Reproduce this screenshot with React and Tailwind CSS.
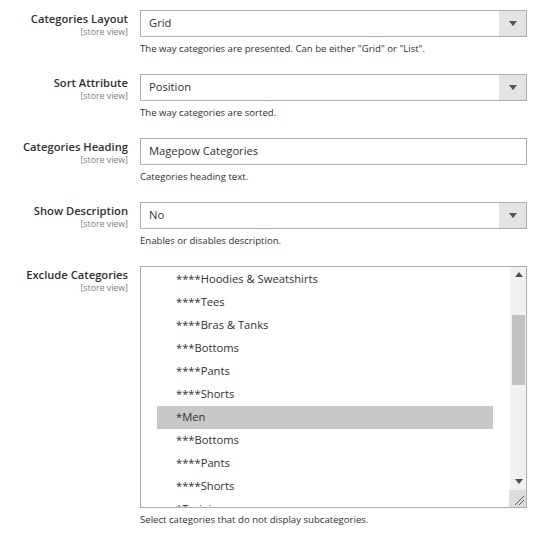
import React from "react";

const OPTIONS = [
  "****Hoodies & Sweatshirts",
  "****Tees",
  "****Bras & Tanks",
  "***Bottoms",
  "****Pants",
  "****Shorts",
  "*Men",
  "***Bottoms",
  "****Pants",
  "****Shorts",
  "*Training",
];

function Label({ title }) {
  return (
    <div className="w-[128px] shrink-0 text-right pt-[1px]">
      <div className="text-[11.2px] leading-[16px] font-semibold text-[#303030]">{title}</div>
      <div className="text-[8.8px] leading-[10px] text-[#808080]">[store view]</div>
    </div>
  );
}

function Arrow({ up }) {
  return (
    <svg width="8" height="5" viewBox="0 0 8 5" className="block">
      {up ? <path d="M0 5 L4 0 L8 5 Z" fill="#505050" /> : <path d="M0 0 L8 0 L4 5 Z" fill="#505050" />}
    </svg>
  );
}

function Select({ value }) {
  return (
    <div className="flex h-[27px] border border-[#adadad] bg-white">
      <div className="flex-1 flex items-center pl-[8px] text-[11.2px] text-[#303030]">{value}</div>
      <div className="w-[27px] bg-[#e3e3e3] flex items-center justify-center">
        <Arrow />
      </div>
    </div>
  );
}

function Help({ children }) {
  return <div className="mt-[5px] text-[9.6px] leading-[14px] text-[#303030]">{children}</div>;
}

function Row({ title, children }) {
  return (
    <div className="flex gap-[12px] mb-[18px]">
      <Label title={title} />
      <div className="w-[387px]">{children}</div>
    </div>
  );
}

export default function App() {
  return (
    <div className="w-[552px] h-[539px] bg-white pt-[10px]" style={{ fontFamily: "'Open Sans', sans-serif" }}>
      <Row title="Categories Layout">
        <Select value="Grid" />
        <Help>The way categories are presented. Can be either "Grid" or "List".</Help>
      </Row>
      <Row title="Sort Attribute">
        <Select value="Position" />
        <Help>The way categories are sorted.</Help>
      </Row>
      <Row title="Categories Heading">
        <div className="h-[27px] border border-[#adadad] bg-white flex items-center pl-[8px] text-[11.2px] text-[#303030]">
          Magepow Categories
        </div>
        <Help>Categories heading text.</Help>
      </Row>
      <Row title="Show Description">
        <Select value="No" />
        <Help>Enables or disables description.</Help>
      </Row>
      <Row title="Exclude Categories">
        <div className="relative h-[242px] border border-[#adadad] bg-white overflow-hidden">
          <div className="pl-[16px] pr-[33px] pt-[1px]">
            {OPTIONS.map((o, i) => (
              <div
                key={i}
                className={
                  "h-[23px] flex items-center pl-[19px] text-[11.2px] text-[#303030] " +
                  (o === "*Men" ? "bg-[#c8c8c8]" : "")
                }
              >
                {o}
              </div>
            ))}
          </div>
          {/* scrollbar */}
          <div className="absolute right-[-1px] top-[-1px] bottom-[17px] w-[17px] bg-[#f1f1f1] flex flex-col items-center">
            <div className="h-[17px] flex items-center justify-center">
              <Arrow up />
            </div>
            <div className="mt-[32px] w-[13px] h-[70px] bg-[#c1c1c1]" />
            <div className="flex-1" />
            <div className="h-[17px] flex items-center justify-center">
              <Arrow />
            </div>
          </div>
          <div className="absolute right-0 bottom-0 w-[17px] h-[17px] bg-[#dcdcdc]">
            <svg width="17" height="17" viewBox="0 0 17 17">
              <path d="M6 15 L15 6 M10 15 L15 10" stroke="#606060" strokeWidth="1" />
            </svg>
          </div>
        </div>
        <Help>Select categories that do not display subcategories.</Help>
      </Row>
    </div>
  );
}
